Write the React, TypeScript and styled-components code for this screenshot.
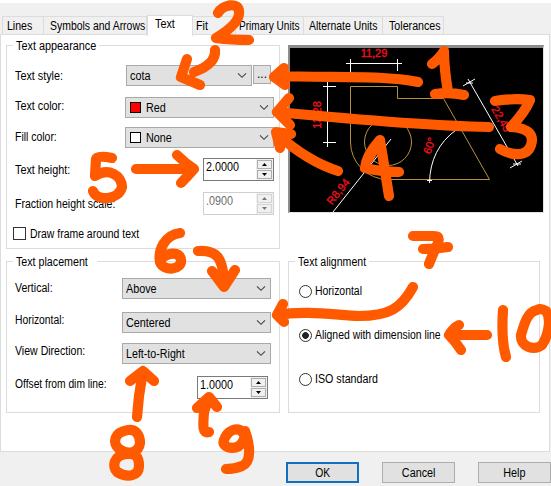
import React from "react";
import styled, { createGlobalStyle, css } from "styled-components";

const Global = createGlobalStyle`
  * { box-sizing: border-box; }
  body { margin: 0; background: #f0f0f0; overflow: hidden; }
`;

const Dialog = styled.div`
  position: relative;
  display: flex;
  flex-direction: column;
  width: 551px;
  height: 486px;
  padding-top: 3px;
  background: linear-gradient(#fff 3px, #f0f0f0 3px);
  font: 12px/16px "Liberation Sans", Arial, sans-serif;
  color: #000;
  white-space: nowrap;
  overflow: hidden;
`;

/* Condenses the glyphs to the proportions of the system dialog font. */
const Txt = styled.span<{ $s?: number; $center?: boolean }>`
  display: inline-block;
  transform: scaleX(${(p) => p.$s ?? 0.9});
  transform-origin: ${(p) => (p.$center ? "center" : "left")};
`;

const TabBar = styled.div`
  display: flex;
  align-items: flex-end;
  height: 32px;
  padding-left: 2px;
`;

const Tab = styled.div<{ $w: number; $pad: number; $active?: boolean }>`
  width: ${(p) => p.$w}px;
  height: 19px;
  padding: 1px 0 0 ${(p) => p.$pad}px;
  border: 1px solid #dcdcdc;
  border-left-width: 0;
  border-bottom: 0;
  &:first-child { border-left-width: 1px; }
  ${(p) =>
    p.$active &&
    css`
      height: 21px;
      padding-top: 0;
      margin-bottom: -1px;
      border-left-width: 1px;
      background: #fff;
      z-index: 1;
    `}
`;

const Panel = styled.div`
  display: grid;
  grid-template-columns: 274px 257px;
  grid-template-rows: 204px 152px;
  column-gap: 8px;
  row-gap: 12px;
  width: 550px;
  height: 418px;
  margin-top: -1px;
  padding: 10px 0 0 5px;
  border: 1px solid #dcdcdc;
  background: #fff;
`;

const Group = styled.div<{ $w?: number }>`
  display: flex;
  flex-direction: column;
  width: ${(p) => p.$w ?? 274}px;
  border: 1px solid #dcdcdc;
`;

const Legend = styled.div<{ $w: number; $h: number }>`
  flex: none;
  width: ${(p) => p.$w}px;
  height: 16px;
  margin: -8px 0 ${(p) => p.$h}px 6px;
  padding-left: 3px;
  background: #fff;
`;

const Row = styled.div<{ $h: number }>`
  display: flex;
  flex: none;
  align-items: flex-start;
  height: ${(p) => p.$h}px;
  padding-left: 8px;
`;

const Label = styled.div<{ $w: number; $top: number }>`
  flex: none;
  width: ${(p) => p.$w}px;
  padding-top: ${(p) => p.$top}px;
`;

const SelectBox = styled.div<{ $w: number }>`
  display: flex;
  flex: none;
  align-items: center;
  width: ${(p) => p.$w}px;
  height: 21px;
  padding: 0 4px 0 3px;
  border: 1px solid #a9a9a9;
  background: #e1e1e1;
  svg { margin-left: auto; }
`;

const Swatch = styled.span<{ $c: string }>`
  width: 11px;
  height: 11px;
  margin: 0 5px 0 1px;
  border: 1px solid #000;
  background: ${(p) => p.$c};
`;

const MoreButton = styled.div`
  width: 18px;
  height: 19px;
  margin-left: 1px;
  border: 1px solid #a9a9a9;
  background: #e1e1e1;
  text-align: center;
`;

const SpinBox = styled.div<{ $off?: boolean }>`
  display: flex;
  justify-content: space-between;
  width: 71px;
  height: 23px;
  border: 1px solid ${(p) => (p.$off ? "#cfcfcf" : "#7a7a7a")};
  padding: 0 0 0 2px;
  color: ${(p) => (p.$off ? "#6d6d6d" : "#000")};
  background: #fff;
`;

const SpinButtons = styled.div`
  display: flex;
  flex-direction: column;
  justify-content: space-between;
  width: 17px;
  padding: 1px;
  background: #f0f0f0;
`;

const SpinButton = styled.div<{ $off?: boolean }>`
  display: flex;
  align-items: center;
  justify-content: center;
  height: 9px;
  border: 1px solid ${(p) => (p.$off ? "#d4d4d4" : "#adadad")};
  background: #f0f0f0;
  color: ${(p) => (p.$off ? "#777" : "#000")};
`;

const CheckBox = styled.span`
  width: 13px;
  height: 13px;
  margin: 1px 4px 0 -2px;
  border: 1px solid #333;
`;

const Radio = styled.span<{ $on?: boolean }>`
  width: 13px;
  height: 13px;
  margin: 2px 3px 0 2px;
  border: 1px solid #333;
  border-radius: 50%;
  background: ${(p) => (p.$on ? "radial-gradient(circle, #222 3px, #fff 3.7px)" : "#fff")};
`;

const Preview = styled.div`
  width: 256px;
  height: 168px;
  border: solid;
  border-width: 3px 1px 1px 2px;
  border-color: #8c8c8c #e3e3e3 #e3e3e3 #8c8c8c;
  background: #000;
  svg { display: block; }
`;

const Footer = styled.div`
  display: flex;
  gap: 23px;
  padding: 10px 0 0 286px;
`;

const Button = styled.div<{ $primary?: boolean }>`
  flex: none;
  width: 73px;
  height: 21px;
  border: ${(p) => (p.$primary ? "2px solid #0f6fc0" : "1px solid #adadad")};
  background: #e1e1e1;
  line-height: ${(p) => (p.$primary ? 18 : 20)}px;
  text-align: center;
`;

const Overlay = styled.svg`
  position: absolute;
  left: 0;
  top: 0;
`;

const Chevron = () => (
  <svg width="10" height="7" viewBox="0 0 10 7" fill="none" stroke="#444" strokeWidth="1.1">
    <path d="M1 1.3 5 5.3 9 1.3" />
  </svg>
);

const Select = ({ w, text, s, color }: { w: number; text: string; s?: number; color?: string }) => (
  <SelectBox $w={w}>
    {color && <Swatch $c={color} />}
    <Txt $s={s}>{text}</Txt>
    <Chevron />
  </SelectBox>
);

const Spin = ({ value, off }: { value: string; off?: boolean }) => (
  <SpinBox $off={off}>
    <Txt $s={0.9}>{value}</Txt>
    <SpinButtons>
      <SpinButton $off={off}>
        <svg width="5" height="3"><path d="M0 3 2.5 0 5 3z" fill="currentColor" /></svg>
      </SpinButton>
      <SpinButton $off={off}>
        <svg width="5" height="3"><path d="M0 0 2.5 3 5 0z" fill="currentColor" /></svg>
      </SpinButton>
    </SpinButtons>
  </SpinBox>
);

const Drawing = () => (
  <svg width="253" height="164" viewBox="290 48 253 164" fill="none">
    <g stroke="#b8923a" strokeWidth="1">
      <path d="M350.5 142V86.5H397.5V98.5H443.5L489.5 179.5H388A37.5 37.5 0 0 1 350.5 142" />
      <circle cx="388" cy="142" r="23.5" />
    </g>
    <g stroke="#fff" strokeWidth="1">
      <path d="M346 63.5H402M350.5 59V81M397.5 59V71M327.5 82V147M323 86.5H336M323 142.5H336" />
      <path d="M333 212 391 139M456 130Q430 149 429.5 183M427 180.5H432" />
      <path d="M468 79 518 166M463 86 475 79M466 83H473M510 168 522 161M513 164H521" />
    </g>
    <g fill="#f0101c" fontFamily="Liberation Sans, Arial, sans-serif" fontSize="11" textAnchor="middle" stroke="#f0101c" strokeWidth=".35">
      <text x="374" y="57">11,29</text>
      <text transform="translate(321 115) rotate(-90)">13,28</text>
      <text transform="translate(341 194) rotate(-51)">R8,94</text>
      <text transform="translate(433 147) rotate(-70)">60°</text>
      <text transform="translate(498 121) rotate(60)">22,45</text>
    </g>
  </svg>
);

const strokes = [
  // 2
  "M218 13C222 5 239 1 239 12C240 21 229 30 216 38Q230 40 249 40",
  "M215 50C216 61 205 68 194 72M187 59 181 77 200 85",
  // 1
  "M432 64Q440 58 444 51Q444 68 448 92M435 94Q450 92 464 95",
  "M418 82C382 75 340 78 275 76M284 68 274 77 285 85",
  // 3
  "M495 101Q514 98 530 100Q525 112 511 127C530 128 534 136 531 145C527 158 510 155 500 149",
  "M489 127C430 126 350 119 277 112M289 98 277 112 290 125",
  // 4
  "M380 140C372 149 366 158 365 168Q382 172 399 172M380 140 389 196M376 146 369 158",
  "M338 171Q307 161 277 134M291 134 276 132 280 148",
  // 5
  "M112 158Q97 155 96 159L95 176C109 167 122 176 122 187C119 200 97 202 93 191",
  "M136 169H194M177 155Q185 163 194 169Q187 177 181 183",
  // 6
  "M180 233C164 235 158 251 160 262C164 272 182 270 181 260C180 250 166 253 160 260",
  "M198 251C215 250 224 255 224 287M212 271 224 287 235 270",
  // 7
  "M413 236H434C444 236 436 245 429 264M423 249Q436 249 448 247",
  "M413 287C401 309 388 316 359 316C335 315 305 310 277 315M283 304 277 315 284 322",
  // 8
  "M128 430C114 432 112 443 119 449C129 456 139 452 140 443C140 434 135 429 128 430ZM127 454C113 455 112 467 117 472C129 479 139 475 139 466C139 457 136 453 127 454Z",
  "M137 417 139 396 143 371M130 381 143 371 154 381",
  // 9
  "M243 433C238 425 227 431 224 440C221 447 232 450 239 446Q245 442 245 431C250 445 252 462 242 466Q235 469 226 469",
  "M209 432C202 434 203 425 204 412L209 397M197 408 209 397 217 407",
  // 10
  "M503 310Q501 340 506 357M537 310C527 312 524 325 521 335C520 347 534 351 542 345C548 336 552 319 546 311Q541 308 537 310Z",
  "M487 335H449M459 325Q453 328 449 335Q455 341 461 350",
];

const Annotations = () => (
  <Overlay width="551" height="486" viewBox="0 0 551 486" fill="none" stroke="#ff5a00" strokeWidth="10.2" strokeLinecap="round" strokeLinejoin="round">
    {strokes.map((d) => <path key={d} d={d} />)}
  </Overlay>
);

export default function App() {
  return (
    <>
      <Global />
      <Dialog>
        <TabBar>
          <Tab $w={42} $pad={4}><Txt $s={0.88}>Lines</Txt></Tab>
          <Tab $w={103} $pad={6}><Txt $s={0.87}>Symbols and Arrows</Txt></Tab>
          <Tab $w={46} $pad={7} $active><Txt $s={0.9}>Text</Txt></Tab>
          <Tab $w={43} $pad={3}><Txt $s={0.9}>Fit</Txt></Tab>
          <Tab $w={68} $pad={3}><Txt $s={0.84}>Primary Units</Txt></Tab>
          <Tab $w={79} $pad={5}><Txt $s={0.87}>Alternate Units</Txt></Tab>
          <Tab $w={61} $pad={6}><Txt $s={0.89}>Tolerances</Txt></Tab>
        </TabBar>
        <Panel>
          <Group>
            <Legend $w={86} $h={11}><Txt $s={0.905}>Text appearance</Txt></Legend>
            <Row $h={32}>
              <Label $w={111} $top={3}><Txt $s={0.9}>Text style:</Txt></Label>
              <Select w={126} text="cota" />
              <MoreButton>...</MoreButton>
            </Row>
            <Row $h={30}>
              <Label $w={110} $top={1}><Txt>Text color:</Txt></Label>
              <Select w={149} text="Red" color="#f00" />
            </Row>
            <Row $h={31}>
              <Label $w={110} $top={2}><Txt $s={0.87}>Fill color:</Txt></Label>
              <Select w={149} text="None" color="#fff" />
            </Row>
            <Row $h={34}>
              <Label $w={188} $top={4}><Txt>Text height:</Txt></Label>
              <Spin value="2.0000" />
            </Row>
            <Row $h={34}>
              <Label $w={188} $top={4}><Txt $s={0.88}>Fraction height scale:</Txt></Label>
              <Spin value=".0900" off />
            </Row>
            <Row $h={16}>
              <CheckBox />
              <Txt $s={0.87}>Draw frame around text</Txt>
            </Row>
          </Group>
          <Preview><Drawing /></Preview>
          <Group>
            <Legend $w={84} $h={8}><Txt $s={0.89}>Text placement</Txt></Legend>
            <Row $h={34}>
              <Label $w={107} $top={2}><Txt $s={0.88}>Vertical:</Txt></Label>
              <Select w={149} text="Above" />
            </Row>
            <Row $h={31}>
              <Label $w={107} $top={0}><Txt $s={0.86}>Horizontal:</Txt></Label>
              <Select w={149} text="Centered" />
            </Row>
            <Row $h={33}>
              <Label $w={107} $top={0}><Txt $s={0.88}>View Direction:</Txt></Label>
              <Select w={149} text="Left-to-Right" s={0.89} />
            </Row>
            <Row $h={23}>
              <Label $w={182} $top={0}><Txt $s={0.855}>Offset from dim line:</Txt></Label>
              <Spin value="1.0000" />
            </Row>
          </Group>
          <Group $w={252}>
            <Legend $w={74} $h={13}><Txt $s={0.88}>Text alignment</Txt></Legend>
            <Row $h={44}><Radio /><Txt $s={0.87}>Horizontal</Txt></Row>
            <Row $h={44}><Radio $on /><Txt $s={0.868}>Aligned with dimension line</Txt></Row>
            <Row $h={16}><Radio /><Txt $s={0.89}>ISO standard</Txt></Row>
          </Group>
        </Panel>
        <Footer>
          <Button $primary><Txt $s={0.86} $center>OK</Txt></Button>
          <Button><Txt $center>Cancel</Txt></Button>
          <Button><Txt $center>Help</Txt></Button>
        </Footer>
        <Annotations />
      </Dialog>
    </>
  );
}
